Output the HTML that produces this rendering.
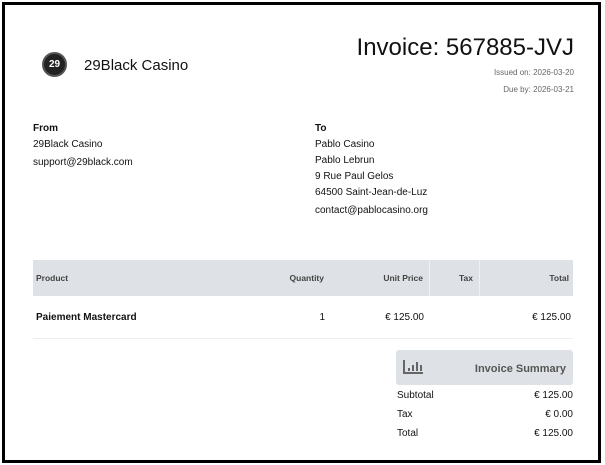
<!DOCTYPE html>
<html><head><meta charset="utf-8"><style>
*{margin:0;padding:0;box-sizing:border-box}
body{width:605px;height:465px;background:#fff;font-family:"Liberation Sans",sans-serif;color:#111;position:relative;overflow:hidden}
.frame{position:absolute;left:2px;top:2px;width:599px;height:461px;border:3px solid #000}
.a{position:absolute;white-space:nowrap}
.s{font-size:10px}
.b{font-weight:bold}
.logo{position:absolute;left:42px;top:52px;width:25px;height:25px;border-radius:50%;background:#222;border:2px solid #555;color:#fff;font-size:10px;font-weight:bold;text-align:center;line-height:21px}
.head{position:absolute;left:33px;top:260px;width:540px;height:36px;background:#dee1e5}
.sep{position:absolute;top:260px;width:1px;height:36px;background:#f0f1f3}
.hd{font-size:8.5px;font-weight:bold;color:#444;top:273px}
.line{position:absolute;left:33px;top:338px;width:540px;height:1px;background:#eceef0}
.sum{position:absolute;left:396px;top:350px;width:177px;height:35px;background:#dee1e5;border-radius:3px}
</style></head><body>
<div class="frame"></div>
<div class="logo">29</div>
<div class="a" style="left:84px;top:57px;font-size:15px">29Black Casino</div>
<div class="a" style="right:31px;top:34px;font-size:24px">Invoice: 567885-JVJ</div>
<div class="a" style="right:31px;top:68px;font-size:8px;color:#666">Issued on: 2026-03-20</div>
<div class="a" style="right:31px;top:85px;font-size:8px;color:#666">Due by: 2026-03-21</div>

<div class="a s b" style="left:33px;top:123px">From</div>
<div class="a s" style="left:33px;top:139px">29Black Casino</div>
<div class="a s" style="left:33px;top:157px">support@29black.com</div>

<div class="a s b" style="left:315px;top:123px">To</div>
<div class="a s" style="left:315px;top:139px">Pablo Casino</div>
<div class="a s" style="left:315px;top:155px">Pablo Lebrun</div>
<div class="a s" style="left:315px;top:171px">9 Rue Paul Gelos</div>
<div class="a s" style="left:315px;top:187px">64500 Saint-Jean-de-Luz</div>
<div class="a s" style="left:315px;top:205px">contact@pablocasino.org</div>

<div class="head"></div>
<div class="sep" style="left:429px"></div>
<div class="sep" style="left:479px"></div>
<div class="a hd" style="left:36px">Product</div>
<div class="a hd" style="right:281px">Quantity</div>
<div class="a hd" style="right:182px">Unit Price</div>
<div class="a hd" style="right:132px">Tax</div>
<div class="a hd" style="right:36px">Total</div>

<div class="a s b" style="left:36px;top:312px">Paiement Mastercard</div>
<div class="a s" style="right:280px;top:312px">1</div>
<div class="a s" style="right:181px;top:312px">€ 125.00</div>
<div class="a s" style="right:34px;top:312px">€ 125.00</div>
<div class="line"></div>

<div class="sum"></div>
<div style="position:absolute;left:403px;top:360px;width:20px;height:14px;border-left:2px solid #666;border-bottom:2px solid #666">
 <div style="position:absolute;left:3px;bottom:1px;width:2px;height:3px;background:#666"></div>
 <div style="position:absolute;left:7px;bottom:1px;width:2px;height:6px;background:#666"></div>
 <div style="position:absolute;left:11px;bottom:1px;width:2px;height:9px;background:#666"></div>
 <div style="position:absolute;left:15px;bottom:1px;width:2px;height:6px;background:#666"></div>
</div>
<div class="a b" style="right:39px;top:363px;font-size:11px;color:#555">Invoice Summary</div>
<div class="a s" style="left:397px;top:390px">Subtotal</div>
<div class="a s" style="right:32px;top:390px">€ 125.00</div>
<div class="a s" style="left:397px;top:409px">Tax</div>
<div class="a s" style="right:32px;top:409px">€ 0.00</div>
<div class="a s" style="left:397px;top:428px">Total</div>
<div class="a s" style="right:32px;top:428px">€ 125.00</div>
</body></html>
